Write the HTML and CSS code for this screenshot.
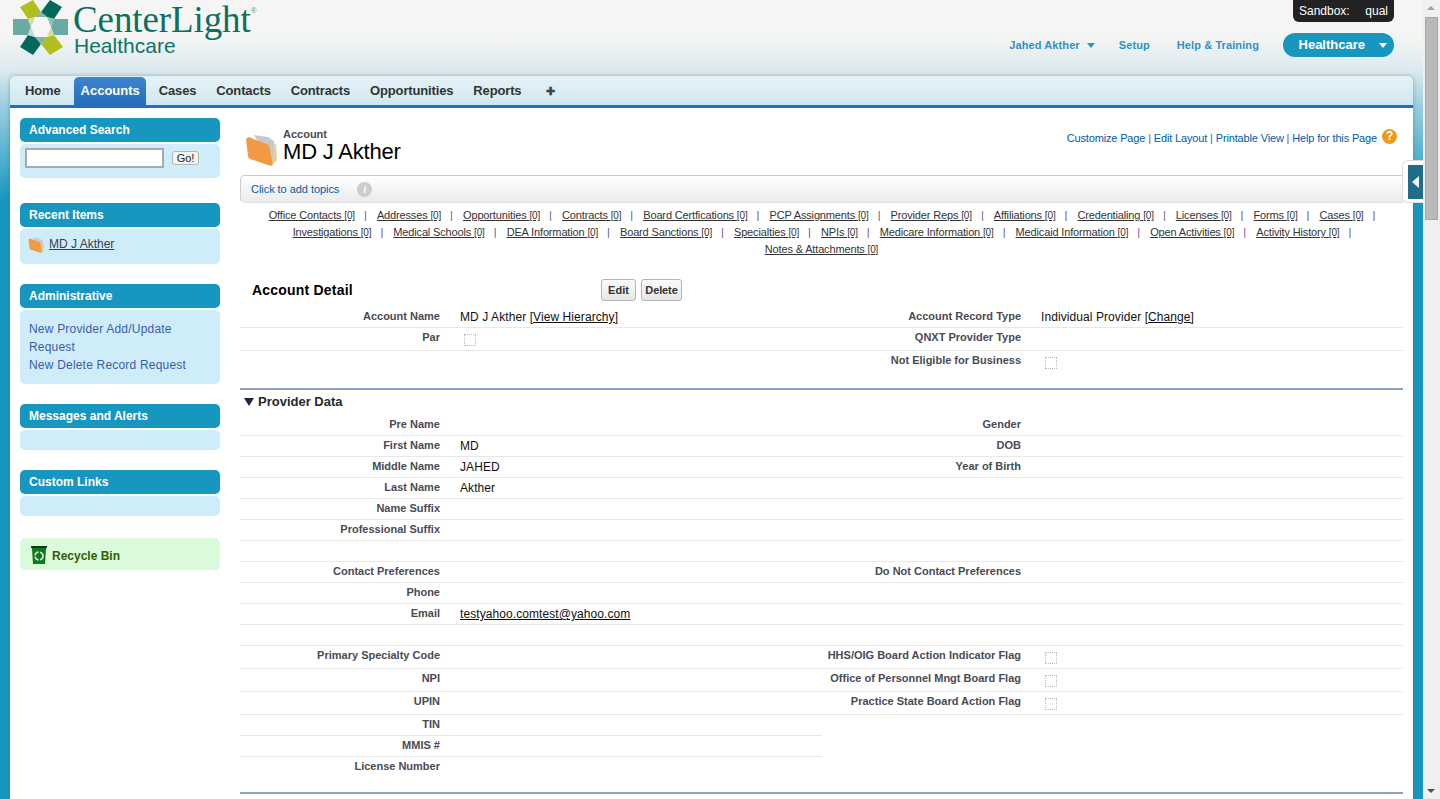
FILE: index.html
```html
<!DOCTYPE html>
<html>
<head>
  <meta charset="UTF-8">
  <title>MD J Akther ~ Account</title>
  <link rel="stylesheet" href="styles.css">
</head>
<body>
  <div class="page">
    <div class="main">
      <div class="header">
        <div class="logo">
          <svg class="logo-mark" width="58" height="56" viewBox="12 0 58 56">
            <polygon points="20,7 33,0 41,12 35,17 28,19" fill="#b0bf1e"/>
            <polygon points="41,12 50,0 62,7 54,19 47,17" fill="#04695c"/>
            <polygon points="13,19 28,19 31,27 28,35 13,35" fill="#6aa9a4"/>
            <polygon points="54,19 68,19 68,35 54,35 51,27" fill="#6aa9a4"/>
            <polygon points="20,47 28,35 35,37 41,44 33,55" fill="#04695c"/>
            <polygon points="41,44 47,37 54,35 63,47 50,55" fill="#b0bf1e"/>
            <polygon points="35,17 47,17 41,12" fill="#7fb3ac"/>
            <polygon points="28,19 35,17 31,27" fill="#d5dc9a"/>
            <polygon points="47,17 54,19 51,27" fill="#8fbdb8"/>
            <polygon points="51,27 54,35 47,37" fill="#d5dc9a"/>
            <polygon points="47,37 35,37 41,44" fill="#7fb3ac"/>
            <polygon points="31,27 35,37 28,35" fill="#c4dbd8"/>
          </svg>
          <div class="logo-text">
            <div class="logo-name">CenterLight<sup>®</sup></div>
            <div class="logo-sub">Healthcare</div>
          </div>
        </div>
        <div class="header-right">
          <div class="sandbox"><span>Sandbox:</span><span>qual</span></div>
          <div class="user-nav">
            <a href="#" class="tight">Jahed Akther <i class="caret"></i></a>
            <a href="#">Setup</a>
            <a href="#" class="tight">Help &amp; Training</a>
            <div class="app-menu"><span>Healthcare</span><i class="caret white"></i></div>
          </div>
        </div>
      </div>

      <div class="card">
        <div class="tabs">
          <a href="#">Home</a>
          <a href="#" class="active">Accounts</a>
          <a href="#">Cases</a>
          <a href="#">Contacts</a>
          <a href="#">Contracts</a>
          <a href="#">Opportunities</a>
          <a href="#">Reports</a>
          <a href="#" class="plus">✚</a>
        </div>

        <div class="card-body">
          <div class="sidebar">
            <div class="side-box first">
              <div class="side-head">Advanced Search</div>
              <div class="side-content search">
                <input type="text"><button>Go!</button>
              </div>
            </div>
            <div class="side-box">
              <div class="side-head">Recent Items</div>
              <div class="side-content recent-item">
                <svg width="16" height="17" viewBox="0 0 32 34">
                  <path d="M9 3l14 2 6 4 2 20-4 4z" fill="#c9c9c9"/>
                  <path d="M1 7l3-2 7 3 13 5 4 20-2 1L5 27q-2-1-2-3z" fill="#f09a45"/>
                  <path d="M27 33l3-21 1-1 1 17z" fill="#e8cf8a"/>
                </svg>
                <a href="#">MD J Akther</a>
              </div>
            </div>
            <div class="side-box">
              <div class="side-head">Administrative</div>
              <div class="side-content admin">
                <a href="#">New Provider Add/Update Request</a>
                <a href="#">New Delete Record Request</a>
              </div>
            </div>
            <div class="side-box">
              <div class="side-head">Messages and Alerts</div>
              <div class="side-content empty"></div>
            </div>
            <div class="side-box">
              <div class="side-head">Custom Links</div>
              <div class="side-content empty"></div>
            </div>
            <div class="recycle">
              <svg width="16" height="20" viewBox="0 0 16 20">
                <path d="M0 1h16l-1 3-1 15H2L1 4z" fill="#0f7a1c"/>
                <path d="M0 1h16l-.4 2H.4z" fill="#0a3d10"/>
                <circle cx="8" cy="11" r="4" fill="none" stroke="#cfe8cf" stroke-width="1.6" stroke-dasharray="5 1.5"/>
              </svg>
              <span>Recycle Bin</span>
            </div>
          </div>

          <div class="content">
            <div class="page-title">
              <svg class="title-icon" width="32" height="34" viewBox="0 0 32 34">
                <path d="M9 3l14 2 6 4 2 20-4 4z" fill="#c9c9c9"/>
                <path d="M1 7l3-2 7 3 13 5 4 20-2 1L5 27q-2-1-2-3z" fill="#f09a45"/>
                <path d="M27 33l3-21 1-1 1 17z" fill="#e8cf8a"/>
              </svg>
              <div class="title-text">
                <div class="title-type">Account</div>
                <div class="title-name">MD J Akther</div>
              </div>
              <div class="page-links">
                <a href="#">Customize Page</a> | <a href="#">Edit Layout</a> | <a href="#">Printable View</a> | <a href="#">Help for this Page</a>
                <span class="help-icon">?</span>
              </div>
            </div>

            <div class="topics">
              <a href="#">Click to add topics</a>
              <span class="info-icon">i</span>
            </div>

            <div class="related">
              <div class="shift">
                <a href="#">Office Contacts <small>[0]</small></a><b>|</b>
                <a href="#">Addresses <small>[0]</small></a><b>|</b>
                <a href="#">Opportunities <small>[0]</small></a><b>|</b>
                <a href="#">Contracts <small>[0]</small></a><b>|</b>
                <a href="#">Board Certfications <small>[0]</small></a><b>|</b>
                <a href="#">PCP Assignments <small>[0]</small></a><b>|</b>
                <a href="#">Provider Reps <small>[0]</small></a><b>|</b>
                <a href="#">Affiliations <small>[0]</small></a><b>|</b>
                <a href="#">Credentialing <small>[0]</small></a><b>|</b>
                <a href="#">Licenses <small>[0]</small></a><b>|</b>
                <a href="#">Forms <small>[0]</small></a><b>|</b>
                <a href="#">Cases <small>[0]</small></a><b>|</b>
              </div>
              <div class="shift">
                <a href="#">Investigations <small>[0]</small></a><b>|</b>
                <a href="#">Medical Schools <small>[0]</small></a><b>|</b>
                <a href="#">DEA Information <small>[0]</small></a><b>|</b>
                <a href="#">Board Sanctions <small>[0]</small></a><b>|</b>
                <a href="#">Specialties <small>[0]</small></a><b>|</b>
                <a href="#">NPIs <small>[0]</small></a><b>|</b>
                <a href="#">Medicare Information <small>[0]</small></a><b>|</b>
                <a href="#">Medicaid Information <small>[0]</small></a><b>|</b>
                <a href="#">Open Activities <small>[0]</small></a><b>|</b>
                <a href="#">Activity History <small>[0]</small></a><b>|</b>
              </div>
              <div>
                <a href="#">Notes &amp; Attachments <small>[0]</small></a>
              </div>
            </div>

            <div class="detail-head">
              <h2>Account Detail</h2>
              <div class="detail-buttons">
                <button class="btn-edit">Edit</button>
                <button class="btn-delete">Delete</button>
              </div>
            </div>

            <div class="row tall top">
              <div class="label">Account Name</div>
              <div class="value">MD J Akther <a href="#">[View Hierarchy]</a></div>
              <div class="label">Account Record Type</div>
              <div class="value">Individual Provider <a href="#">[Change]</a></div>
            </div>
            <div class="row tall">
              <div class="label">Par</div>
              <div class="value"><i class="check"></i></div>
              <div class="label">QNXT Provider Type</div>
              <div class="value"></div>
            </div>
            <div class="row tall plain">
              <div class="label"></div>
              <div class="value"></div>
              <div class="label">Not Eligible for Business</div>
              <div class="value"><i class="check"></i></div>
            </div>

            <div class="section-head"><i class="twist"></i>Provider Data</div>

            <div class="row">
              <div class="label">Pre Name</div><div class="value"></div>
              <div class="label">Gender</div><div class="value"></div>
            </div>
            <div class="row">
              <div class="label">First Name</div><div class="value">MD</div>
              <div class="label">DOB</div><div class="value"></div>
            </div>
            <div class="row">
              <div class="label">Middle Name</div><div class="value">JAHED</div>
              <div class="label">Year of Birth</div><div class="value"></div>
            </div>
            <div class="row">
              <div class="label">Last Name</div><div class="value">Akther</div>
              <div class="label"></div><div class="value"></div>
            </div>
            <div class="row">
              <div class="label">Name Suffix</div><div class="value"></div>
              <div class="label"></div><div class="value"></div>
            </div>
            <div class="row">
              <div class="label">Professional Suffix</div><div class="value"></div>
              <div class="label"></div><div class="value"></div>
            </div>
            <div class="row">
              <div class="label"></div><div class="value"></div>
              <div class="label"></div><div class="value"></div>
            </div>
            <div class="row">
              <div class="label">Contact Preferences</div><div class="value"></div>
              <div class="label">Do Not Contact Preferences</div><div class="value"></div>
            </div>
            <div class="row">
              <div class="label">Phone</div><div class="value"></div>
              <div class="label"></div><div class="value"></div>
            </div>
            <div class="row">
              <div class="label">Email</div><div class="value"><a href="#">testyahoo.comtest@yahoo.com</a></div>
              <div class="label"></div><div class="value"></div>
            </div>
            <div class="row">
              <div class="label"></div><div class="value"></div>
              <div class="label"></div><div class="value"></div>
            </div>
            <div class="row tall">
              <div class="label">Primary Specialty Code</div><div class="value"></div>
              <div class="label">HHS/OIG Board Action Indicator Flag</div><div class="value"><i class="check"></i></div>
            </div>
            <div class="row tall">
              <div class="label">NPI</div><div class="value"></div>
              <div class="label">Office of Personnel Mngt Board Flag</div><div class="value"><i class="check"></i></div>
            </div>
            <div class="row tall">
              <div class="label">UPIN</div><div class="value"></div>
              <div class="label">Practice State Board Action Flag</div><div class="value"><i class="check"></i></div>
            </div>
            <div class="row half">
              <div class="label">TIN</div><div class="value"></div>
            </div>
            <div class="row half">
              <div class="label">MMIS #</div><div class="value"></div>
            </div>
            <div class="row half plain">
              <div class="label">License Number</div><div class="value"></div>
            </div>
            <div class="section-line"></div>
          </div>
        </div>
      </div>
      <div class="sidebar-handle"><div class="handle-inner"><i></i></div></div>
    </div>

    <div class="scrollbar">
      <i class="arrow up"></i>
      <div class="thumb"></div>
      <i class="arrow down"></i>
    </div>
  </div>
</body>
</html>
```

FILE: styles.css
```css
html, body { margin: 0; height: 100%; overflow: hidden; }
body { font-family: "Liberation Sans", Arial, sans-serif; font-size: 12px; color: #222; }
a { color: inherit; }
i { display: block; }

.page { display: flex; height: 799px; }
.main {
  position: relative;
  flex: 1;
  overflow: hidden;
  background: linear-gradient(#f5f5f5 35px, #dbe9ee 72px, #9ccfe0 105px, #1797c0 200px);
}

/* header */
.header { display: flex; justify-content: space-between; height: 76px; padding: 0 29px 0 12px; box-sizing: border-box; }
.logo { display: flex; height: 56px; }
.logo-mark { display: block; }
.logo-text { margin-left: 3px; color: #0d6e62; }
.logo-name { padding-top: 3px; font-family: "Liberation Serif", serif; font-size: 37px; line-height: 33px; letter-spacing: -0.1px; white-space: nowrap; }
.logo-name sup { font-family: "Liberation Sans", sans-serif; font-size: 8px; line-height: 0; vertical-align: 19px; color: #5d9a92; }
.logo-sub { font-size: 21px; line-height: 20px; margin-left: 1px; color: #0f7465; }

.header-right { display: flex; flex-direction: column; align-items: flex-end; }
.sandbox {
  display: flex;
  justify-content: space-between;
  width: 101px;
  height: 22px;
  box-sizing: border-box;
  padding: 4px 6px 0;
  background: #222;
  color: #fff;
  border-radius: 0 0 6px 6px;
  font-size: 12px;
}
.user-nav { display: flex; align-items: center; height: 24px; margin-top: 11px; }
.user-nav > a { margin-right: 27px; color: #2e93c4; font-size: 11px; font-weight: bold; letter-spacing: 0.1px; text-decoration: none; display: flex; align-items: center; }
.user-nav > a.tight { margin-right: 24px; }
.caret { width: 0; height: 0; margin-left: 7px; border: 4px solid transparent; border-top: 5px solid #2e93c4; border-bottom: 0; }
.caret.white { border-top-color: #fff; margin-left: 14px; }
.app-menu {
  display: flex;
  align-items: center;
  justify-content: flex-end;
  width: 111px;
  height: 24px;
  box-sizing: border-box;
  padding-right: 7px;
  background: #1797c0;
  border-radius: 12px;
  color: #fff;
  font-size: 13px;
  font-weight: bold;
}
.app-menu span { padding-bottom: 2px; }

/* card and tabs */
.card { margin: 0 10px; height: 723px; background: #fff; border-radius: 6px 6px 0 0; box-shadow: 0 0 4px rgba(60, 110, 130, 0.5); }
.tabs {
  display: flex;
  align-items: flex-end;
  height: 29px;
  padding-left: 5px;
  background: linear-gradient(#e5f2f8, #d0e8f0);
  border-bottom: 3px solid #236fbd;
  border-radius: 6px 6px 0 0;
}
.tabs a {
  display: block;
  height: 28px;
  line-height: 28px;
  padding: 0 10px;
  font-size: 13px;
  font-weight: bold;
  letter-spacing: -0.15px;
  color: #333;
  text-decoration: none;
}
.tabs a.active { margin: 0 3px; padding: 0 6px 0 7px; background: linear-gradient(#3d84cc, #236fbd); border-radius: 5px 5px 0 0; color: #fff; letter-spacing: 0; }
.tabs a.plus { font-size: 11px; color: #444; padding-left: 15px; }

.card-body { display: flex; }

/* sidebar */
.sidebar { width: 200px; margin: 10px 20px 0 10px; flex: none; }
.side-box { margin-bottom: 20px; }
.side-box.first { margin-bottom: 25px; }
.side-head {
  height: 24px;
  line-height: 24px;
  padding-left: 9px;
  background: #1797c0;
  border-radius: 5px;
  color: #fff;
  font-weight: bold;
  font-size: 12px;
}
.side-content { margin-top: 2px; background: #cfedf8; border-radius: 5px; }
.search { display: flex; height: 34px; padding: 4px 5px 0; box-sizing: border-box; align-items: flex-start; }
.search input { width: 139px; height: 20px; box-sizing: border-box; margin: 0; border: 2px solid #a9a9a9; padding: 0; background: #fff; }
.search button { margin: 3px 0 0 8px; width: 27px; height: 14px; padding: 0; font: 11px "Liberation Sans", sans-serif; color: #222; background: #f3f3f3; border: 1px solid #b5b5b5; border-radius: 3px; }
.recent-item { display: flex; align-items: flex-start; height: 35px; padding: 7px 0 0 8px; box-sizing: border-box; }
.recent-item a { margin: 1px 0 0 5px; color: #3b3b55; }
.admin { height: 74px; padding: 10px 9px 0; box-sizing: border-box; line-height: 18px; letter-spacing: 0.2px; }
.admin a { display: block; color: #3a5cab; text-decoration: none; }
.empty { height: 20px; }
.recycle {
  display: flex;
  align-items: center;
  height: 32px;
  margin-top: 22px;
  padding-left: 11px;
  background: #dcfadc;
  border-radius: 5px;
  color: #2f6000;
  font-weight: bold;
}
.recycle svg { margin-top: 2px; }
.recycle span { margin: 3px 0 0 5px; }

/* page content */
.content { width: 1163px; flex: none; }
.page-title { display: flex; height: 67px; padding: 20px 6px 0 5px; box-sizing: border-box; }
.title-icon { margin-top: 4px; }
.title-text { margin-left: 6px; }
.title-type { font-size: 11px; font-weight: bold; line-height: 13px; color: #4a4a56; }
.title-name { font-size: 22px; line-height: 22px; letter-spacing: -0.2px; color: #000; }
.page-links { display: flex; white-space: pre; margin-left: auto; height: 16px; padding-top: 4px; font-size: 11px; letter-spacing: -0.15px; color: #6a4fa0; }
.page-links a { color: #015ba7; text-decoration: none; }
.help-icon {
  width: 15px;
  height: 15px;
  margin: -3px 0 0 5px;
  border-radius: 50%;
  background: #ec9a1c;
  color: #fff;
  font-size: 12px;
  font-weight: bold;
  line-height: 15px;
  text-align: center;
}

.topics {
  display: flex;
  align-items: center;
  height: 28px;
  box-sizing: border-box;
  padding-left: 10px;
  background: linear-gradient(#fff, #ebebeb);
  border: 1px solid #ccc;
  border-right: 0;
  border-bottom-color: #e2e2e2;
  border-radius: 5px 0 0 5px;
  font-size: 11px;
}
.topics a { color: #015ba7; text-decoration: none; letter-spacing: -0.05px; }
.info-icon {
  width: 15px;
  height: 15px;
  margin-left: 18px;
  border-radius: 50%;
  background: #ccc;
  color: #fff;
  font: italic bold 11px/15px "Liberation Serif", serif;
  text-align: center;
}

.related { padding-top: 4px; height: 52px; line-height: 17px; text-align: center; font-size: 11px; color: #333; }
.related .shift { padding-left: 8px; }
.related a { white-space: nowrap; letter-spacing: -0.15px; }
.related small { font-size: 10px; line-height: 1; }
.related b { font-weight: normal; color: #6a4fa0; margin: 0 7px 0 9px; }

.detail-head { display: flex; align-items: center; height: 29px; margin: 16px 0 1px; padding-left: 12px; }
.detail-head h2 { width: 349px; margin: 0; font-size: 14px; line-height: 22px; letter-spacing: 0.2px; color: #000; }
.detail-buttons { display: flex; gap: 5px; }
.detail-buttons button {
  height: 22px;
  padding: 0;
  font: bold 11px "Liberation Sans", sans-serif;
  color: #333;
  background: linear-gradient(#fbfbfb, #e6e6e6);
  border: 1px solid #b5b5b5;
  border-radius: 3px;
}
.btn-edit { width: 35px; }
.btn-delete { width: 41px; letter-spacing: -0.1px; }

/* field rows */
.row {
  display: grid;
  grid-template-columns: 200px 382px 199px 1fr;
  height: 21px;
  box-sizing: border-box;
  border-bottom: 1px solid #e8e8e8;
}
.row.tall { height: 23px; }
.row.plain { border-bottom: 0; }
.row.half { width: 582px; grid-template-columns: 200px 1fr; }
.label { padding-top: 3px; text-align: right; font-size: 11px; line-height: 13px; font-weight: bold; color: #4a4a56; }
.value { padding: 2px 0 0 20px; line-height: 16px; letter-spacing: 0.08px; color: #111; }
.value a { color: #111; }
.row.top .label { padding-top: 5px; }
.row.top .value { padding-top: 4px; }
.check { width: 10px; height: 10px; margin: 4px 0 0 4px; border: 1px dotted #bbb; }

.section-head {
  display: flex;
  align-items: center;
  height: 23px;
  margin-top: 14px;
  border-top: 2px solid #8ea1c0;
  padding: 0 0 2px 4px;
  font-size: 13px;
  font-weight: bold;
  color: #27282e;
}
.twist { width: 0; height: 0; margin-right: 4px; border: 5px solid transparent; border-top: 8px solid #1c2740; border-bottom: 0; }
.section-line { height: 2px; margin-top: 14px; background: #8ea1c0; }

/* collapse handle over the right edge */
.sidebar-handle {
  position: absolute;
  top: 160px;
  right: 0;
  width: 21px;
  height: 43px;
  box-sizing: border-box;
  padding: 4px 0 0 5px;
  background: #fff;
  border: 1px solid #ddd;
  border-right: 0;
  border-radius: 6px 0 0 6px;
}
.handle-inner { display: flex; align-items: center; height: 34px; padding-left: 4px; background: #1f6d87; }
.handle-inner i { width: 0; height: 0; border: 6px solid transparent; border-left: 0; border-right: 7px solid #f2f2f2; }

/* scrollbar */
.scrollbar { position: relative; width: 17px; flex: none; background: #f0f0f0; }
.thumb { position: absolute; top: 17px; left: 2px; width: 13px; height: 203px; box-sizing: border-box; background: #b9b9b9; border: 1px solid #a8a8a8; }
.arrow { position: absolute; left: 4px; width: 0; height: 0; border: 4px solid transparent; }
.arrow.up { top: 6px; border-top: 0; border-bottom: 4px solid #a0a0a0; }
.arrow.down { bottom: 6px; border-bottom: 0; border-top: 4px solid #505050; }
```
